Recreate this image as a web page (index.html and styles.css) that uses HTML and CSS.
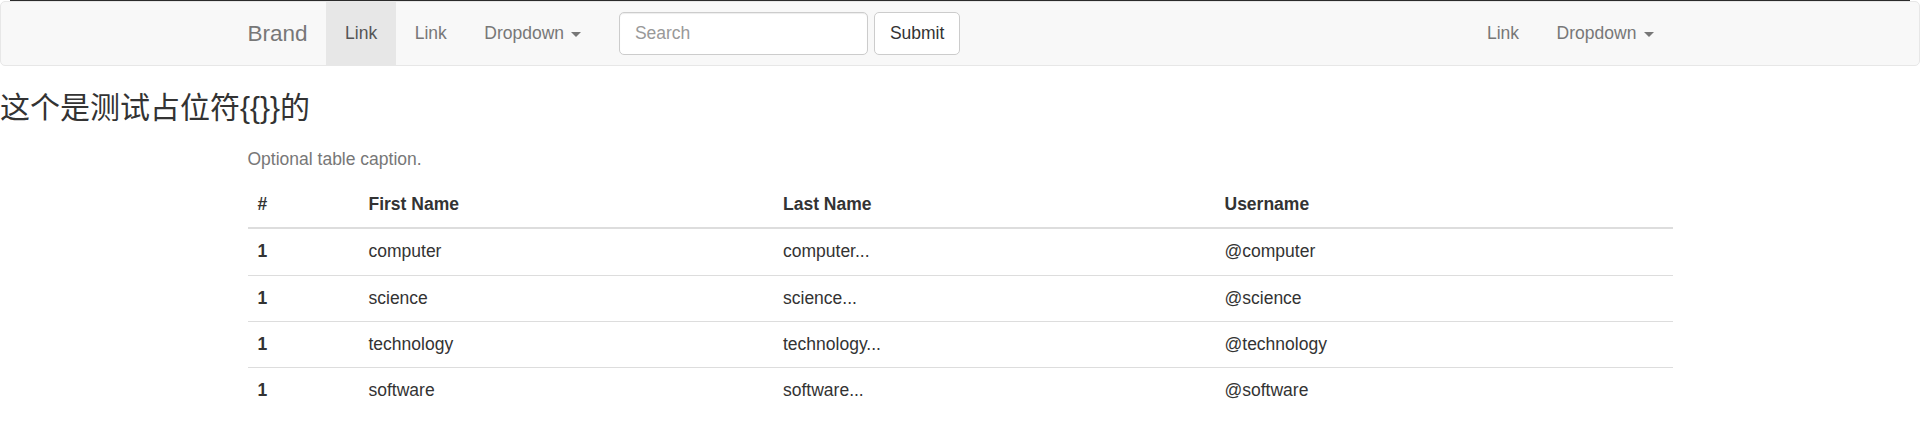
FILE: index.html
```html
<!DOCTYPE html>
<html lang="zh-CN">
<head>
<meta charset="utf-8">
<title>Table</title>
<link rel="stylesheet" href="styles.css">
</head>
<body>
<div class="topline"></div>
<nav class="navbar">
  <div class="container nav-inner">
    <a class="brand" href="#">Brand</a>
    <ul class="nav">
      <li class="active"><a href="#">Link</a></li>
      <li><a href="#">Link</a></li>
      <li><a href="#">Dropdown <span class="caret"></span></a></li>
    </ul>
    <form class="nav-form">
      <input class="search" type="text" placeholder="Search">
      <button class="btn" type="submit">Submit</button>
    </form>
    <ul class="nav nav-right">
      <li><a href="#">Link</a></li>
      <li><a href="#">Dropdown <span class="caret"></span></a></li>
    </ul>
  </div>
</nav>
<h3 class="title">这个是测试占位符{{}}的</h3>
<div class="container">
  <table class="table">
    <caption>Optional table caption.</caption>
    <thead>
      <tr>
        <th class="col-num">#</th>
        <th class="col-first">First Name</th>
        <th class="col-last">Last Name</th>
        <th class="col-user">Username</th>
      </tr>
    </thead>
    <tbody>
      <tr><th>1</th><td>computer</td><td>computer...</td><td>@computer</td></tr>
      <tr><th>1</th><td>science</td><td>science...</td><td>@science</td></tr>
      <tr><th>1</th><td>technology</td><td>technology...</td><td>@technology</td></tr>
      <tr><th>1</th><td>software</td><td>software...</td><td>@software</td></tr>
    </tbody>
  </table>
</div>
</body>
</html>
```
FILE: styles.css
```css
* { box-sizing: border-box; }
html, body { margin: 0; padding: 0; }
body {
  font-family: "Liberation Sans", Arial, "Noto Sans CJK SC", sans-serif;
  font-size: 17.5px;
  line-height: 25px;
  color: #333;
  background: #fff;
}
.topline {
  position: absolute;
  top: 0;
  left: 10px;
  right: 10px;
  height: 1px;
  background: #2b2b2b;
}
.navbar {
  margin: 1px 0 25px;
  background: #f8f8f8;
  border: 1px solid #e7e7e7;
  border-radius: 5px;
  min-height: 62.5px;
}
.container {
  width: 1462.5px;
  margin: 0 auto;
  padding: 0 18.75px;
}
.nav-inner {
  display: flex;
  align-items: flex-start;
}
.brand {
  display: block;
  margin-left: -18.75px;
  padding: 18.75px;
  height: 62.5px;
  font-size: 22.5px;
  line-height: 25px;
  color: #777;
  text-decoration: none;
}
.nav {
  display: flex;
  list-style: none;
  margin: 0;
  padding: 0;
}
.nav a {
  display: block;
  padding: 18.75px;
  line-height: 25px;
  color: #777;
  text-decoration: none;
}
.nav .active a {
  color: #555;
  background: #e7e7e7;
}
.nav-right { margin-left: auto; }
.caret {
  display: inline-block;
  width: 0;
  height: 0;
  margin-left: 2.5px;
  vertical-align: middle;
  border-top: 5px solid;
  border-left: 5px solid transparent;
  border-right: 5px solid transparent;
}
.nav-form {
  display: flex;
  align-items: center;
  gap: 5.5px;
  margin: 10px 0 0;
  padding: 0 18.75px;
}
.search {
  width: 249.5px;
  height: 42.5px;
  padding: 7.5px 15px;
  font-family: inherit;
  font-size: 17.5px;
  line-height: 25px;
  color: #555;
  background: #fff;
  border: 1px solid #ccc;
  border-radius: 5px;
  box-shadow: inset 0 1px 1px rgba(0,0,0,.075);
  outline: none;
}
.search::placeholder { color: #999; }
.btn {
  height: 42.5px;
  padding: 7.5px 15px;
  font-family: inherit;
  font-size: 17.5px;
  line-height: 25px;
  color: #333;
  background: #fff;
  border: 1px solid #ccc;
  border-radius: 5px;
}
.title {
  margin: 25px 0 13.5px;
  font-size: 30px;
  line-height: 33px;
  font-weight: 400;
  color: #333;
}
.table {
  width: 100%;
  border-collapse: collapse;
  border-spacing: 0;
  table-layout: fixed;
}
.table caption {
  caption-side: top;
  padding: 10px 0;
  color: #777;
  text-align: left;
}
.table th, .table td {
  padding: 10px 10px 10.25px;
  line-height: 25px;
  text-align: left;
  vertical-align: top;
  border-top: 1px solid #ddd;
}
.table thead th {
  vertical-align: bottom;
  border-top: 0;
  border-bottom: 2px solid #ddd;
}
.table th { font-weight: bold; }
.col-num { width: 111px; }
.col-first { width: 414.5px; }
.col-last { width: 441.5px; }
```
